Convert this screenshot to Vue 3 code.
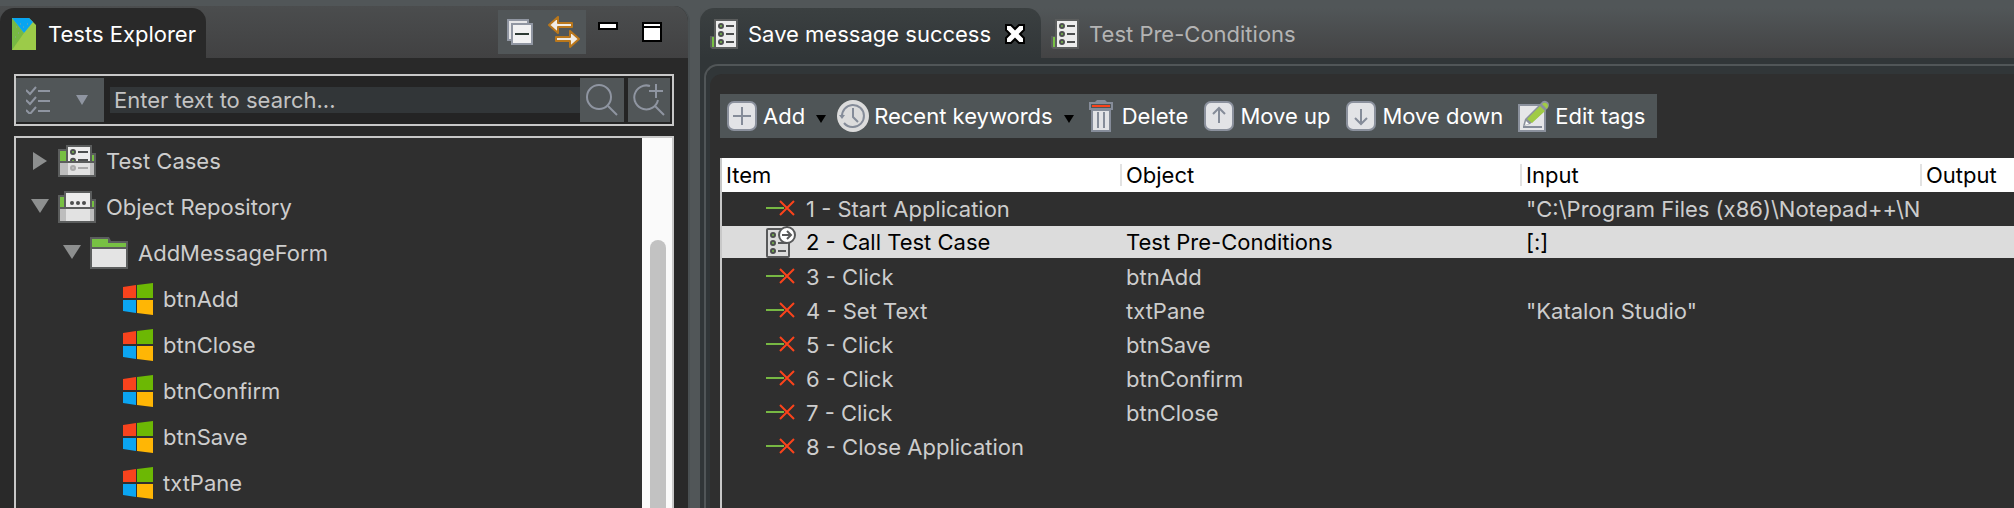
<script setup>
import { ref } from 'vue'

const query = ref('')

const tree = [
  { label: 'Test Cases', icon: 'i-cases', level: 1, state: 'closed' },
  { label: 'Object Repository', icon: 'i-repo', level: 1, state: 'open' },
  { label: 'AddMessageForm', icon: 'i-folder', level: 2, state: 'open' },
  { label: 'btnAdd', icon: 'i-win', level: 3 },
  { label: 'btnClose', icon: 'i-win', level: 3 },
  { label: 'btnConfirm', icon: 'i-win', level: 3 },
  { label: 'btnSave', icon: 'i-win', level: 3 },
  { label: 'txtPane', icon: 'i-win', level: 3 }
]

const actions = [
  { label: 'Add', icon: 'i-add', menu: true },
  { label: 'Recent keywords', icon: 'i-clock', menu: true },
  { label: 'Delete', icon: 'i-trash' },
  { label: 'Move up', icon: 'i-up' },
  { label: 'Move down', icon: 'i-down' },
  { label: 'Edit tags', icon: 'i-edit' }
]

const columns = ['Item', 'Object', 'Input', 'Output']

const steps = [
  { item: 'Start Application', input: '"C:\\Program Files (x86)\\Notepad++\\N' },
  { item: 'Call Test Case', object: 'Test Pre-Conditions', input: '[:]', call: true },
  { item: 'Click', object: 'btnAdd' },
  { item: 'Set Text', object: 'txtPane', input: '"Katalon Studio"' },
  { item: 'Click', object: 'btnSave' },
  { item: 'Click', object: 'btnConfirm' },
  { item: 'Click', object: 'btnClose' },
  { item: 'Close Application' }
]
</script>

<template>
  <svg class="defs" aria-hidden="true">
    <symbol id="i-case" viewBox="0 0 28 30">
      <path d="M4 0h24v30H2l-2-2V17h4z" fill="#5b5d5d" />
      <path d="M2 18h2v10H2z" fill="#77c043" />
      <path d="M6 2h20v26H6z" fill="#ececec" />
      <g fill="#77b84a" stroke="#4d4f4f" stroke-width="2">
        <circle cx="11" cy="7" r="2" /><circle cx="11" cy="15" r="2" /><circle cx="11" cy="23" r="2" />
      </g>
      <path d="M16 7h8M16 15h8M16 23h8" stroke="#4d4f4f" stroke-width="2" />
    </symbol>
    <symbol id="i-call" viewBox="0 0 30 32">
      <rect x="1" y="3" width="22" height="28" rx="1" fill="#dcdcdc" stroke="#58595a" stroke-width="2" />
      <g fill="#77b84a" stroke="#4d4f4f" stroke-width="2">
        <circle cx="7" cy="9" r="2" /><circle cx="7" cy="17" r="2" /><circle cx="7" cy="25" r="2" />
      </g>
      <path d="M12 17h9M12 25h8" stroke="#58595a" stroke-width="2" />
      <circle cx="21" cy="9" r="8" fill="#fff" stroke="#58595a" stroke-width="2" />
      <path d="M16 9h9M21 5l4 4-4 4" fill="none" stroke="#58595a" stroke-width="2" />
    </symbol>
    <symbol id="i-step" viewBox="0 0 30 32">
      <path d="M0 15h18" stroke="#77b843" stroke-width="2" />
      <path d="M14 8l14 14M28 8L14 22" stroke="#fb431b" stroke-width="2" />
    </symbol>
    <symbol id="i-cases" viewBox="0 0 38 32">
      <path d="M0 4h8V0h26v8h4v24H0z" fill="#5b5d5d" />
      <path d="M2 6h6v10H2zM34 10h2v6h-2z" fill="#77c043" />
      <path d="M10 2h22v14H10z" fill="#ececec" />
      <g fill="#77b84a" stroke="#4d4f4f" stroke-width="2">
        <circle cx="15" cy="7" r="2" /><path d="M13 16c0-3 4-3 4 0" />
      </g>
      <path d="M20 7h10M20 15h10" stroke="#4d4f4f" stroke-width="2" />
      <path d="M2 18h34v12H2z" fill="#bdbdbd" />
      <path d="M10 18h22v12H10z" fill="#e2e2e2" />
      <circle cx="15" cy="23" r="2" fill="#c3c3c3" stroke="#a9a9a9" stroke-width="2" />
      <path d="M20 23h10" stroke="#a9a9a9" stroke-width="2" />
    </symbol>
    <symbol id="i-repo" viewBox="0 0 38 32">
      <path d="M0 4h6V0h28v8h4v24H0z" fill="#5b5d5d" />
      <path d="M2 6h4v10H2zM34 10h2v6h-2z" fill="#77c043" />
      <path d="M8 2h24v14H8z" fill="#ececec" />
      <g fill="#4d4f4f"><circle cx="14" cy="12" r="2" /><circle cx="20" cy="12" r="2" /><circle cx="26" cy="12" r="2" /></g>
      <path d="M2 18h34v12H2z" fill="#bdbdbd" />
      <path d="M8 18h24v12H8z" fill="#e2e2e2" />
    </symbol>
    <symbol id="i-folder" viewBox="0 0 38 32">
      <path d="M0 0h19l2 4h17v28H0z" fill="#5b5d5d" />
      <path d="M2 2h16v4h18v4H2z" fill="#77c043" />
      <path d="M2 12h34v18H2z" fill="#e4e4e4" />
    </symbol>
    <symbol id="i-win" viewBox="0 0 30 32">
      <path d="M0 4l13-2v13H0z" fill="#f8431d" />
      <path d="M14 2l16-2v15H14z" fill="#6cb804" />
      <path d="M0 17h13v13L0 28z" fill="#0ba5f2" />
      <path d="M14 17h16v15l-16-2z" fill="#ffb605" />
    </symbol>
    <symbol id="i-add" viewBox="0 0 32 32">
      <rect x="2" y="2" width="28" height="28" rx="6" fill="#e2e3e6" stroke="#8b919d" stroke-width="2" />
      <path d="M16 7v18M7 16h18" stroke="#858c99" stroke-width="2" />
    </symbol>
    <symbol id="i-up" viewBox="0 0 32 32">
      <rect x="2" y="2" width="28" height="28" rx="6" fill="#e2e3e6" stroke="#8b919d" stroke-width="2" />
      <path d="M16 23V8M10 14l6-6 6 6" fill="none" stroke="#858c99" stroke-width="2" />
    </symbol>
    <symbol id="i-down" viewBox="0 0 32 32">
      <rect x="2" y="2" width="28" height="28" rx="6" fill="#e2e3e6" stroke="#8b919d" stroke-width="2" />
      <path d="M16 9v15M10 18l6 6 6-6" fill="none" stroke="#858c99" stroke-width="2" />
    </symbol>
    <symbol id="i-clock" viewBox="0 0 32 32">
      <circle cx="16" cy="16" r="16" fill="#dcdcdc" />
      <path d="M5 17A11 11 0 1 1 16 27a11 11 0 0 1-9-4" fill="none" stroke="#858c99" stroke-width="2" />
      <path d="M2 15h6l-3 4z" fill="#858c99" />
      <path d="M16 8v9l5 5" fill="none" stroke="#858c99" stroke-width="2" />
    </symbol>
    <symbol id="i-trash" viewBox="0 0 32 32">
      <path d="M4 2h6l2-2h8l2 2h6v8H4z" fill="#858c99" />
      <path d="M6 4h20v4H6z" fill="#4f5557" />
      <path d="M7 5h18v2H7z" fill="#fb431b" />
      <path d="M7 10h18v21H7z" fill="#e2e3e6" stroke="#858c99" stroke-width="2" />
      <path d="M13 12v16M19 12v16" stroke="#858c99" stroke-width="2" />
    </symbol>
    <symbol id="i-edit" viewBox="0 0 32 32">
      <path d="M1 5h26v26H1z" fill="#e6e6e8" stroke="#8b919d" stroke-width="2" />
      <path d="M5 27h19" stroke="#858c99" stroke-width="2" />
      <path d="M5 26l2-7L23 3q2-3 5-2t3 4q0 2-2 4L12 24z" fill="#8b919d" />
      <path d="M9 19L22 6l5 5-13 12zM24 4q2-2 4-1t2 3l-1 3z" fill="#a0cb45" />
      <path d="M7 25l1-4 3 3z" fill="#fff" />
    </symbol>
  </svg>

  <div class="workbench">
    <aside class="explorer">
      <header class="pane-head">
        <h1 class="pane-tab">
          <svg class="logo" viewBox="0 0 24 32" aria-hidden="true">
            <path d="M0 0h17l7 7v25H0z" fill="#9ccb49" />
            <path d="M0 0l12 15L0 32z" fill="#76b943" />
            <path d="M0 0h17l4 4-9 11z" fill="#08a5f1" />
            <path d="M8 6h1M15 6h1M11 9h1M4 9h1M6 15h1M3 19h1" stroke="#8aa3a0" />
          </svg>
          Tests Explorer
        </h1>
        <div class="view-tools">
          <button type="button" aria-label="Collapse all">
            <svg width="32" height="32" viewBox="0 0 32 32">
              <path d="M4 4h20v20H4z" fill="#e6e6e8" stroke="#9096a2" stroke-width="2" />
              <path d="M7 7h20v20H7z" fill="#c9ccd3" />
              <path d="M8 8h20v20H8z" fill="#f1f1f2" stroke="#9096a2" stroke-width="2" />
              <path d="M11 18h14" stroke="#2d3a34" stroke-width="2" />
            </svg>
          </button>
          <button type="button" aria-label="Link with editor">
            <svg width="32" height="32" viewBox="0 0 32 32" fill="#f0ece6" stroke="#b9771c" stroke-width="2" stroke-linejoin="round">
              <path d="M1 9l9-8v6h14v4H10v6z" />
              <path d="M31 23l-9-8v6H8v4h14v6z" />
            </svg>
          </button>
        </div>
        <button type="button" class="win-btn" aria-label="Minimize">
          <svg width="20" height="20" viewBox="0 0 20 20"><path d="M1 1h18v6H1z" fill="#fff" stroke="#000" stroke-width="2" /></svg>
        </button>
        <button type="button" class="win-btn" aria-label="Maximize">
          <svg width="20" height="20" viewBox="0 0 20 20"><path d="M1 1h18v18H1z" fill="#fff" stroke="#000" stroke-width="2" /><path d="M2 5h16" stroke="#000" stroke-width="2" /></svg>
        </button>
      </header>

      <form class="search" @submit.prevent>
        <button type="button" class="filter" aria-label="Filter">
          <svg width="24" height="28" viewBox="0 0 24 28" fill="none" stroke="#8f95a1" stroke-width="2">
            <path d="M0 4l4 4 6-7M0 14l4 4 6-7M0 24l4 4 6-7M12 5h12M12 15h12M12 25h12" />
          </svg>
          <svg width="12" height="10" viewBox="0 0 12 10"><path d="M0 0h12L6 10z" fill="#8f95a1" /></svg>
        </button>
        <input v-model="query" type="text" placeholder="Enter text to search..." aria-label="Search tests">
        <button type="submit" class="find" aria-label="Search">
          <svg width="32" height="32" viewBox="0 0 32 32" fill="none" stroke="#8f95a1" stroke-width="2"><circle cx="13" cy="13" r="12" /><path d="M22 22l9 9" /></svg>
        </button>
        <button type="button" class="find advanced" aria-label="Advanced search">
          <svg width="32" height="32" viewBox="0 0 32 32" fill="none" stroke="#8f95a1" stroke-width="2"><path d="M17 2A12 12 0 1 0 25 16M22 22l9 9M23 0v14M16 7h14" /></svg>
        </button>
      </form>

      <div class="tree-box">
        <ul class="tree">
          <li v-for="node in tree" :key="node.label" :class="'level-' + node.level">
            <button v-if="node.state" type="button" class="twisty" :aria-label="'Toggle ' + node.label">
              <svg width="18" height="18" viewBox="0 0 18 18" fill="#8d8f8f">
                <path v-if="node.state === 'closed'" d="M2 0l14 9-14 9z" />
                <path v-else d="M0 1h18L9 15z" />
              </svg>
            </button>
            <svg class="node-icon" aria-hidden="true"><use :href="'#' + node.icon" /></svg>
            <span>{{ node.label }}</span>
          </li>
        </ul>
        <div class="scrollbar"><div class="thumb"></div></div>
      </div>
    </aside>

    <main class="editor">
      <nav class="tabs">
        <div class="tab active">
          <button type="button" class="tab-name">
            <svg width="28" height="30" aria-hidden="true"><use href="#i-case" /></svg>
            Save message success
          </button>
          <button type="button" class="close" aria-label="Close tab">
            <svg width="20" height="20" viewBox="0 0 20 20">
              <path d="M1 1h5l4 4 4-4h5v5l-4 4 4 4v5h-5l-4-4-4 4H1v-5l4-4-4-4z" fill="#fff" stroke="#000" stroke-width="2" />
            </svg>
          </button>
        </div>
        <div class="tab">
          <button type="button" class="tab-name">
            <svg width="28" height="30" aria-hidden="true"><use href="#i-case" /></svg>
            Test Pre-Conditions
          </button>
        </div>
      </nav>

      <div class="frame">
        <div class="sheet">
          <div class="toolbar" role="toolbar">
            <button v-for="a in actions" :key="a.label" type="button">
              <svg width="32" height="32" aria-hidden="true"><use :href="'#' + a.icon" /></svg>
              {{ a.label }}
              <svg v-if="a.menu" class="caret" width="10" height="8" viewBox="0 0 10 8"><path d="M0 0h10L5 8z" /></svg>
            </button>
          </div>

          <div class="table-box">
            <table>
              <colgroup><col class="first"><col class="wide"><col class="wide"><col></colgroup>
              <thead>
                <tr><th v-for="c in columns" :key="c" scope="col"><span>{{ c }}</span></th></tr>
              </thead>
              <tbody>
                <tr v-for="(s, i) in steps" :key="i" :class="{ selected: s.call }">
                  <td>
                    <div class="item">
                      <svg width="30" height="32" aria-hidden="true"><use :href="s.call ? '#i-call' : '#i-step'" /></svg>
                      {{ i + 1 }} - {{ s.item }}
                    </div>
                  </td>
                  <td>{{ s.object }}</td>
                  <td>{{ s.input }}</td>
                  <td></td>
                </tr>
              </tbody>
            </table>
          </div>
        </div>
      </div>
    </main>
  </div>
</template>

<style>
body { background: #515658; }
</style>

<style scoped>
* { box-sizing: border-box; }
.defs { position: absolute; width: 0; height: 0; }
button {
  display: flex;
  align-items: center;
  padding: 0;
  border: 0;
  background: none;
  color: inherit;
  font: inherit;
}
svg { flex: none; }
.workbench {
  display: grid;
  grid-template-columns: 690fr 10px 1314fr;
  min-height: 100vh;
  background: #515658;
  color: #cdcdcd;
  font: 22px/26px Inter, "Liberation Sans", sans-serif;
  white-space: nowrap;
}

/* Explorer */
.explorer {
  display: flex;
  flex-direction: column;
  min-width: 0;
  margin-top: 6px;
  border-right: 2px solid #4a5052;
  border-radius: 0 16px 0 0;
  background: #292929;
  overflow: hidden;
}
.pane-head {
  display: flex;
  align-items: flex-start;
  height: 52px;
  padding-right: 26px;
  background: linear-gradient(#4b4d4e, #414142);
}
.pane-tab {
  display: flex;
  align-items: center;
  gap: 12px;
  height: 50px;
  margin: 2px auto 0 0;
  padding: 2px 10px 0 12px;
  border-radius: 14px 14px 0 0;
  background: #292929;
  color: #fff;
  font: inherit;
}
.logo { width: 24px; height: 32px; }
.view-tools {
  display: flex;
  justify-content: space-between;
  width: 88px;
  height: 44px;
  margin: 4px 12px 0 0;
  padding: 0 6px;
  background: #515658;
}
.win-btn { margin-top: 16px; }
.win-btn + .win-btn { margin-left: 24px; }
.search {
  display: flex;
  align-items: center;
  gap: 4px;
  height: 52px;
  margin: 16px 14px 10px;
  padding-right: 2px;
  border: 2px solid #c8c8c8;
  background: #242424;
}
.filter {
  justify-content: space-between;
  width: 88px;
  height: 44px;
  padding: 0 16px 0 10px;
  background: #515658;
}
.search input {
  flex: 1;
  min-width: 0;
  height: 26px;
  margin: 0 -4px 0 2px;
  padding: 0 4px;
  border: 0;
  outline: 0;
  background: #323638;
  color: #cdcdcd;
  font: inherit;
}
.search input::placeholder { color: #c3c3c3; opacity: 1; }
.find {
  justify-content: center;
  width: 44px;
  height: 44px;
  background: #515658;
}
.find.advanced { width: 42px; }
.tree-box {
  display: flex;
  flex: 1;
  margin: 0 14px;
  border: solid #c8c8c8;
  border-width: 2px 2px 0;
  background: #2f2f2f;
}
.tree {
  flex: 1;
  margin: 0;
  padding: 0;
  list-style: none;
}
.tree li {
  display: flex;
  align-items: center;
  height: 46px;
}
.level-1 { padding-left: 15px; }
.level-2 { padding-left: 47px; }
.level-3 { padding-left: 107px; }
.twisty { margin-right: 9px; }
.node-icon { width: 38px; height: 32px; margin-right: 10px; }
.level-3 .node-icon { width: 30px; }
.scrollbar {
  width: 30px;
  padding: 102px 6px 0 8px;
  background: #fafafa;
}
.thumb {
  height: 100%;
  border-radius: 8px 8px 0 0;
  background: #c2c2c2;
}

/* Editor */
.editor {
  grid-column: 3;
  display: flex;
  flex-direction: column;
  min-width: 0;
  padding-top: 8px;
}
.tabs {
  display: flex;
  height: 50px;
  background: linear-gradient(#515658, #434344);
}
.tab {
  display: flex;
  align-items: center;
  padding: 2px 16px 0 10px;
  color: #b4b4b4;
}
.tab.active {
  border-radius: 14px 14px 0 0;
  background: linear-gradient(#3b4041, #313638);
  color: #fff;
}
.tab-name { gap: 10px; }
.close { margin-left: 14px; }
.frame {
  display: flex;
  flex: 1;
  padding: 6px 0 0 4px;
  background: #313638;
}
.sheet {
  display: flex;
  flex: 1;
  flex-direction: column;
  min-width: 0;
  padding: 28px 0 0 14px;
  border: solid #515658;
  border-width: 2px 0 0 2px;
  border-radius: 14px 0 0 0;
  background: #2f2f2f;
  box-shadow: inset 4px 8px #313638;
}
.toolbar {
  display: flex;
  align-self: flex-start;
  gap: 15px;
  height: 44px;
  margin-bottom: 20px;
  padding: 0 12px 0 6px;
  background: #4f5557;
  color: #fff;
}
.toolbar button { gap: 5px; }
.caret { margin: 6px -4px 0 6px; }
.table-box {
  flex: 1;
  border-left: 2px solid #c8c8c8;
}
table {
  width: 100%;
  border-spacing: 0;
  table-layout: fixed;
}
.first { width: 398px; }
.wide { width: 400px; }
th, td {
  height: 34px;
  padding: 0 0 0 4px;
  overflow: hidden;
  font-weight: 400;
  text-align: left;
}
td { padding: 0 0 0 6px; }
th {
  background: #fff;
  color: #000;
}
th:not(:first-child) { padding-left: 0; }
th:not(:first-child) span {
  display: block;
  height: 22px;
  padding-left: 4px;
  border-left: 2px solid #e2e2e2;
  line-height: 22px;
}
.selected td {
  border-bottom: 2px solid #2f2f2f;
  background: #dcdcdc;
  color: #000;
}
.item {
  display: flex;
  align-items: center;
  gap: 10px;
  height: 32px;
  padding-left: 38px;
}
</style>
